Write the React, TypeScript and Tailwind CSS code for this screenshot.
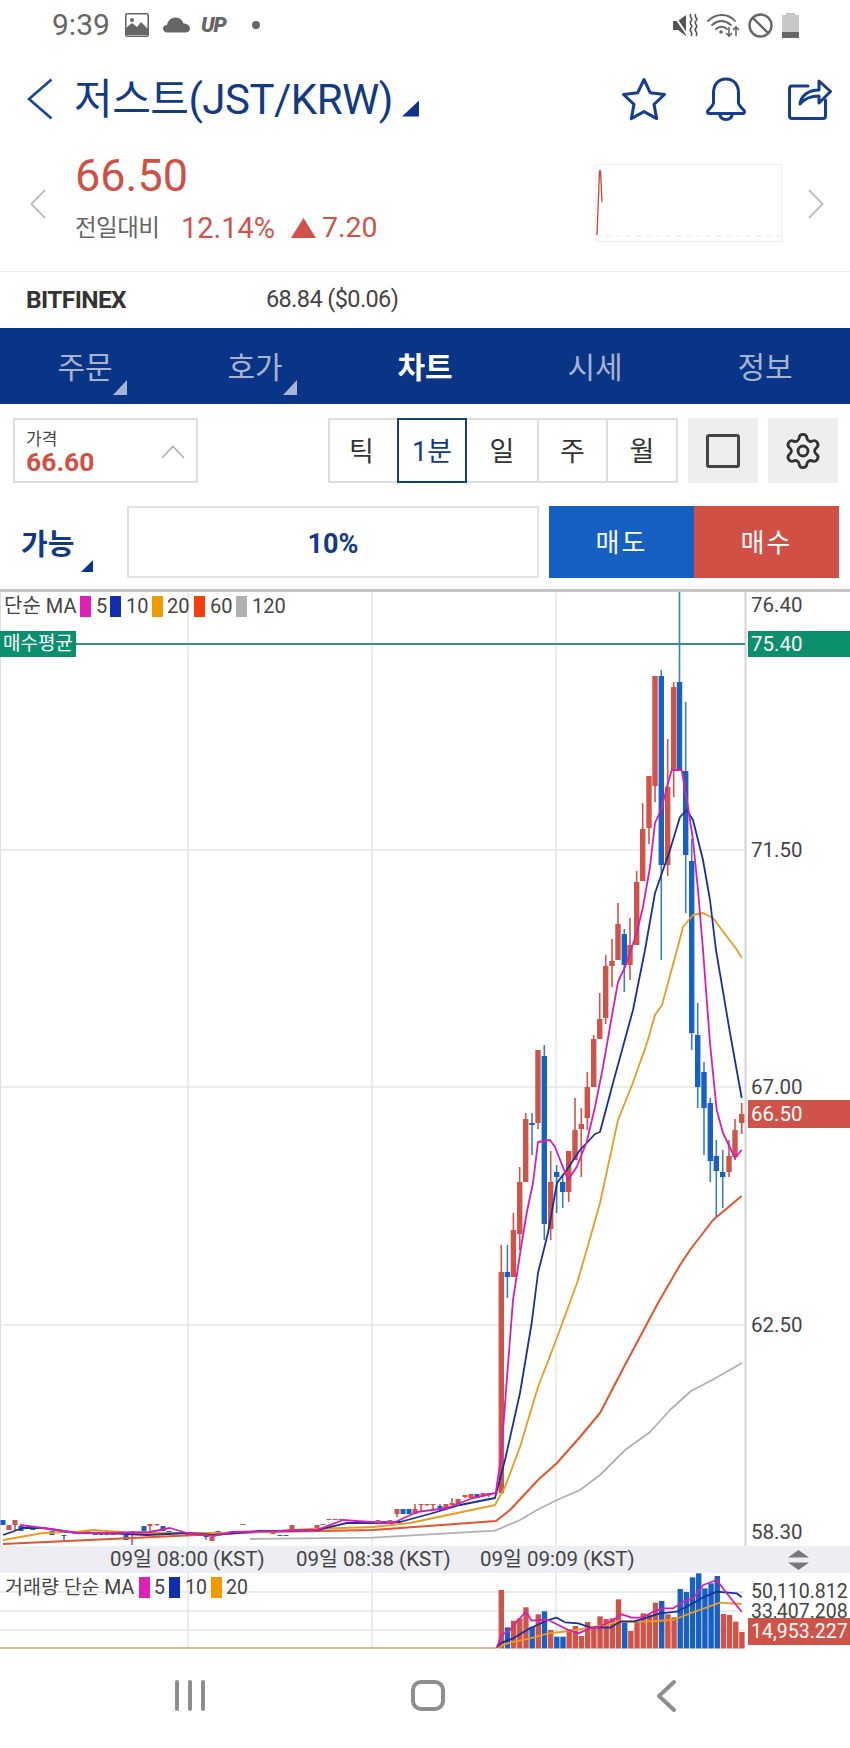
import React from "react";
import { Settings } from "lucide-react";

const RED = "#d0534a";
const BLUE = "#1760c4";

// [x, bodyTop, bodyBottom, wickTop, wickLow, isUp]
type Candle = [number, number, number, number, number, boolean];

const smallCandles: Candle[] = [
  [3, 1520, 1525, 1520, 1525, false], [9, 1525, 1530, 1525, 1530, true], [15, 1520, 1525, 1520, 1530, true],
  [21, 1526, 1531, 1526, 1531, false], [33, 1529, 1530, 1529, 1530, false], [52, 1531, 1535, 1531, 1535, false],
  [64, 1535, 1536, 1535, 1541, false], [83, 1531, 1533, 1531, 1534, true], [88, 1531, 1533, 1531, 1534, true],
  [95, 1533, 1535, 1533, 1535, false], [101, 1534, 1535, 1534, 1535, false], [107, 1531, 1535, 1531, 1535, false],
  [113, 1531, 1535, 1531, 1535, true], [119, 1531, 1533, 1531, 1533, true], [126, 1535, 1540, 1535, 1540, false],
  [132, 1531, 1532, 1531, 1545, true], [144, 1526, 1531, 1526, 1531, false], [150, 1524, 1526, 1524, 1535, true],
  [157, 1524, 1525, 1524, 1526, true], [163, 1526, 1531, 1526, 1531, false], [169, 1531, 1535, 1531, 1535, false],
  [182, 1535, 1536, 1535, 1536, false], [188, 1533, 1535, 1533, 1535, false], [193, 1532, 1535, 1532, 1535, true],
  [200, 1535, 1536, 1535, 1536, false], [206, 1535, 1537, 1535, 1540, false], [212, 1537, 1541, 1537, 1541, true],
  [218, 1531, 1535, 1531, 1535, false], [231, 1531, 1532, 1531, 1533, true], [237, 1531, 1532, 1531, 1533, true],
  [243, 1524, 1525, 1524, 1525, true], [273, 1531, 1534, 1531, 1534, true], [280, 1535, 1536, 1535, 1536, false],
  [286, 1535, 1536, 1535, 1536, false], [292, 1525, 1530, 1525, 1530, true], [317, 1525, 1530, 1525, 1530, true],
  [323, 1524, 1525, 1524, 1525, true], [329, 1519, 1520, 1519, 1520, true], [335, 1519, 1520, 1519, 1520, true],
  [341, 1519, 1520, 1519, 1520, true], [347, 1520, 1521, 1520, 1521, true], [353, 1520, 1521, 1520, 1521, true],
  [366, 1521, 1524, 1521, 1524, false], [372, 1521, 1524, 1521, 1524, false], [378, 1520, 1521, 1520, 1521, true],
  [384, 1521, 1524, 1521, 1524, false], [390, 1520, 1521, 1520, 1521, true], [397, 1509, 1514, 1509, 1517, true],
  [403, 1509, 1514, 1509, 1514, false], [409, 1509, 1514, 1509, 1514, false], [415, 1509, 1514, 1504, 1514, true],
  [421, 1504, 1505, 1504, 1511, true], [427, 1504, 1505, 1504, 1506, true], [433, 1504, 1505, 1504, 1510, true],
  [440, 1506, 1508, 1504, 1511, false], [446, 1504, 1508, 1504, 1508, true], [452, 1503, 1505, 1498, 1505, true],
  [458, 1499, 1504, 1499, 1504, true], [465, 1495, 1497, 1495, 1498, true], [471, 1494, 1498, 1494, 1498, true],
  [477, 1494, 1498, 1494, 1498, false], [483, 1493, 1495, 1493, 1497, true], [489, 1493, 1494, 1493, 1497, true],
  [495, 1493, 1494, 1493, 1494, true],
];

const bigCandles: Candle[] = [
  [501.3, 1272, 1493, 1245, 1493, true], [507.4, 1272, 1277, 1245, 1298, false], [513.4, 1230, 1277, 1213, 1277, true],
  [519.7, 1182, 1234, 1167, 1250, true], [525.7, 1119, 1182, 1113, 1182, true], [532, 1123, 1125, 1113, 1155, false],
  [538, 1050, 1123, 1050, 1129, true], [544.3, 1056, 1224, 1045, 1240, false], [550.7, 1182, 1229, 1151, 1240, true],
  [556.7, 1172, 1177, 1165, 1213, false], [562.7, 1182, 1192, 1175, 1208, false], [568.7, 1151, 1192, 1151, 1202, true],
  [575, 1130, 1160, 1098, 1160, true], [581.3, 1124, 1129, 1108, 1177, true], [587.3, 1087, 1118, 1072, 1130, true],
  [593.7, 1039, 1087, 1035, 1087, true], [599.7, 1019, 1039, 993, 1039, true], [605.7, 966, 1018, 955, 1024, true],
  [612, 961, 966, 939, 987, true], [618, 924, 960, 903, 960, true], [624.3, 934, 965, 929, 992, false],
  [630, 945, 965, 918, 980, true], [636.7, 882, 945, 871, 945, true], [642.7, 829, 881, 803, 881, true],
  [649, 776, 828, 776, 844, true], [655, 676, 786, 676, 802, true], [661.3, 676, 865, 670, 960, false],
  [667.7, 787, 865, 739, 876, true], [673.7, 687, 770, 682, 797, true], [679.5, 682, 770, 592, 770, false],
  [685.7, 771, 855, 702, 913, false], [691.7, 861, 1033, 839, 1050, false], [697.7, 1035, 1087, 1003, 1108, false],
  [704, 1072, 1108, 1062, 1155, false], [710.3, 1103, 1161, 1098, 1182, false], [716.3, 1156, 1171, 1140, 1218, false],
  [722.7, 1172, 1177, 1150, 1208, false], [729, 1156, 1172, 1140, 1177, true], [735, 1130, 1157, 1119, 1160, true],
  [741.7, 1114, 1123, 1103, 1134, true],
];

const ma5 =
  "20,1525 43,1528 77,1533 107,1533 150,1532 170,1528 187,1533 213,1536 233,1532 280,1531 317,1530 343,1520 370,1522 393,1523 417,1512 447,1508 473,1498 495.7,1493 500.7,1460 513,1300 521.7,1243 526.7,1213 533,1183 538,1142 550,1140 555,1147 568,1180 576.7,1167 586.7,1142 595,1107 603,1067 611.7,1017 618,982 625,967 636.7,933 643,907 650,867 655,823 661.7,808 668,783 671.7,770 681.7,770 688,807 693,840 698,890 703,950 710,1043 716.7,1110 723,1133 735,1158 741.7,1150";
const ma10 =
  "3,1535 23,1528 43,1528 77,1533 107,1533 147,1535 187,1533 213,1535 260,1531 280,1531 317,1530 347,1523 373,1523 400,1522 433,1513 460,1505 495,1498 505,1460 520,1393 531.7,1323 538,1273 548,1233 557,1183 566.7,1170 580,1150 595,1134 600,1132 613,1083 633,1010 645,950 655,893 670,850 680,817 686.7,810 693,820 703,860 710,900 716,950 730,1033 741.7,1098";
const ma20 =
  "3,1540 43,1533 77,1531.7 93,1530 133,1533 173,1533 213,1533 260,1532 310,1529 373,1527 410,1523 495,1505 505,1487 520,1447 538,1387 555,1343 577,1283 586.7,1250 600,1203 618,1120 632,1085 647,1043 655,1015 662,1005 677,950 683,927 693,915 703,913 713,918 737,950 741.7,958";
const ma60 =
  "3,1544 260,1532 373,1530 496,1521 510,1510 538,1480 557,1463 580,1437 600,1413 625,1365 658,1303 680,1265 690,1250 713,1220 741.7,1196";
const ma120 =
  "250,1539 373,1537.7 495,1530.7 520,1520 537,1510 557,1500 580,1490 600,1475 625,1450 650,1432 670,1410 691,1391 714,1379 742,1363";

// [bar top in 3x zoom, isUp]; the zoom starts at (490, 1570)
const volumes: [number, boolean][] = [
  [60, true], [172, false], [152, true], [145, true], [112, true], [170, false], [133, true], [124, false],
  [180, true], [200, false], [200, false], [178, true], [168, true], [198, true], [156, true], [170, true],
  [139, true], [147, true], [145, true], [88, true], [158, false], [183, true], [153, true], [130, true],
  [133, true], [98, true], [93, false], [133, true], [142, true], [57, false], [66, false], [22, false],
  [10, false], [55, false], [40, false], [18, false], [132, true], [135, true], [155, true], [186, true],
];

const toChart = (pts: number[][]) =>
  pts.map(([x, y]) => `${(490 + x / 3).toFixed(1)},${(1570 + y / 3).toFixed(1)}`).join(" ");

const volMa5 = toChart([
  [20, 232], [35, 195], [60, 180], [85, 150], [108, 125], [125, 152], [145, 150], [175, 150], [205, 165], [235, 180],
  [265, 190], [300, 175], [330, 170], [370, 150], [395, 133], [425, 143], [455, 143], [490, 125], [520, 115], [550, 115],
  [580, 95], [610, 85], [640, 45], [680, 30], [710, 70], [755, 125],
]);
const volMa10 = toChart([
  [20, 232], [35, 218], [70, 205], [120, 175], [175, 150], [200, 143], [225, 157], [265, 160], [300, 172], [360, 173],
  [390, 155], [430, 155], [470, 143], [510, 130], [560, 125], [600, 105], [640, 82], [680, 65], [740, 70], [755, 82],
]);
const volMa20 = toChart([
  [20, 232], [60, 218], [120, 205], [175, 190], [240, 183], [300, 172], [350, 165], [390, 152], [450, 155], [500, 153],
  [550, 150], [600, 130], [650, 112], [690, 98], [755, 102],
]);

function Candles({ items, bodyWidth }: { items: Candle[]; bodyWidth: number }) {
  return (
    <>
      {items.map(([x, top, bottom, wickTop, wickLow, up], i) => (
        <g key={i}>
          <line x1={x} x2={x} y1={wickTop} y2={wickLow} stroke={up ? RED : "#3b7cc6"} strokeWidth={1.6} />
          <rect x={x - bodyWidth / 2} y={top} width={bodyWidth} height={bottom - top} fill={up ? RED : BLUE} />
        </g>
      ))}
    </>
  );
}

function Line({ points, color, width = 1.8 }: { points: string; color: string; width?: number }) {
  return <polyline points={points} fill="none" stroke={color} strokeWidth={width} strokeLinejoin="round" />;
}

function Swatch({ className }: { className: string }) {
  return <span className={`inline-block w-[11px] h-[21px] ${className}`} />;
}

function CornerTriangle({ className }: { className: string }) {
  return <span className={`block [clip-path:polygon(100%_0,100%_100%,0_100%)] ${className}`} />;
}

function StatusBar() {
  return (
    <div className="h-[50px] flex items-center pl-[52px] pr-[51px] text-[#666666]">
      <span className="text-[30px] leading-none w-[73px]">9:39</span>
      <svg width="24" height="24" viewBox="0 0 24 24">
        <rect x="0.8" y="0.8" width="22.4" height="22.4" rx="1.5" fill="none" stroke="#666" strokeWidth="1.6" />
        <path d="M1 22V15l6-5 5 4 4-5 7 7v6z" fill="#666" />
        <circle cx="7" cy="7" r="2" fill="#666" />
      </svg>
      <svg className="ml-[14px]" width="27" height="16" viewBox="0 0 27 16">
        <path d="M5 15.5C1.5 15.5 0 13.5 0 11.5C0 9.5 1.8 8 4 8C4.5 3.5 8.5 0.5 12.5 0.5C17 0.5 19.8 3.5 20.5 6.5C24.5 6.5 27 9 27 11.5C27 14 25 15.5 22.5 15.5Z" fill="#666" />
      </svg>
      <span className="ml-[11px] w-[30px] text-[21px] leading-none font-black italic tracking-[-1px]">UP</span>
      <span className="ml-[21px] w-[8px] h-[8px] rounded-full bg-[#666666]" />
      <svg className="ml-auto" width="25" height="25" viewBox="0 0 25 25">
        <path d="M0 8h5l8-6v21l-8-6H0z" fill="#555" />
        <path d="M0 1l15 22" stroke="#fff" strokeWidth="2" />
        <path d="M19 1c-3 3 3 4 0 7s3 4 0 7 3 4 0 8M24 1c-3 3 3 4 0 7s3 4 0 7 3 4 0 8" fill="none" stroke="#555" strokeWidth="1.6" transform="translate(-1 0)" />
      </svg>
      <svg className="ml-[9px]" width="33" height="25" viewBox="0 0 33 25">
        <path d="M1 8c8-8 20-8 27 0M5 12c6-5 13-5 19 0M9 16c3-3 8-3 11 0" fill="none" stroke="#666" strokeWidth="1.8" strokeLinecap="round" />
        <circle cx="14" cy="19" r="1.8" fill="#666" />
        <path d="M22 14v9m-3-3l3 3 3-3M29 23v-9m-3 3l3-3 3 3" fill="none" stroke="#666" strokeWidth="1.6" />
      </svg>
      <svg className="ml-[8px]" width="25" height="25" viewBox="0 0 25 25">
        <circle cx="12.5" cy="12.5" r="11" fill="none" stroke="#666" strokeWidth="2.4" />
        <path d="M5 5l15 15" stroke="#666" strokeWidth="2.4" />
      </svg>
      <div className="ml-[9px] w-[17px] h-[25px] flex flex-col items-center">
        <span className="w-[9px] h-[2px] bg-[#c4c4c4]" />
        <span className="w-[17px] h-[17px] bg-[#c8c8c8]" />
        <span className="w-[17px] h-[6px] bg-[#666666]" />
      </div>
    </div>
  );
}

function TitleBar() {
  return (
    <div className="h-[95px] box-border pt-[2px] flex items-center pl-[27px] text-[#123a85]">
      <svg width="26" height="42" viewBox="0 0 26 42">
        <path d="M24.5 1.5L2 21l22.5 19.5" fill="none" stroke="#1a4a96" strokeWidth="2.8" />
      </svg>
      <span className="ml-[21px] mt-[2px] text-[42px] leading-none tracking-[-0.5px] whitespace-nowrap w-[318px]">저스트(JST/KRW)</span>
      <CornerTriangle className="ml-[10px] mt-[20px] w-[17px] h-[16px] bg-[#0d348a]" />
      <svg className="ml-[202px]" width="46" height="44" viewBox="0 0 46 44">
        <path d="M23 2.5l6.2 13.2 14.3 1.8-10.5 9.9 2.7 14.2L23 34.6 10.3 41.6 13 27.4 2.5 17.5l14.3-1.8z" fill="none" stroke="#153f8c" strokeWidth="3" strokeLinejoin="round" />
      </svg>
      <svg className="ml-[38px]" width="42" height="44" viewBox="0 0 42 44">
        <path d="M21 2c-8.5 0-12.5 6.5-12.5 14v9.5c0 3-3 5-5.5 8-1 1.2-0.5 3 1 3h34c1.5 0 2-1.8 1-3-2.5-3-5.5-5-5.5-8V16C33.5 8.5 29.5 2 21 2z" fill="none" stroke="#153f8c" strokeWidth="3" strokeLinejoin="round" />
        <path d="M14.5 36.5c0.5 4 3.2 6 6.5 6s6-2 6.5-6" fill="none" stroke="#153f8c" strokeWidth="3" />
      </svg>
      <svg className="ml-[41px]" width="44" height="42" viewBox="0 0 44 42">
        <path d="M20 8H4c-1.5 0-2.5 1-2.5 2.5V38c0 1.5 1 2.5 2.5 2.5h31c1.5 0 2.5-1 2.5-2.5V22" fill="none" stroke="#153f8c" strokeWidth="3" strokeLinecap="round" />
        <path d="M12 26c1-8 8-14 19-14V3l11.5 10.5L31 25v-7c-8 0-14 2-19 8z" fill="#fff" stroke="#153f8c" strokeWidth="3" strokeLinejoin="round" />
      </svg>
    </div>
  );
}

function PriceRow() {
  return (
    <div className="h-[126px] flex items-start">
      <svg className="ml-[30px] mt-[44px]" width="16" height="30" viewBox="0 0 16 30">
        <path d="M15 1L1.5 15 15 29" fill="none" stroke="#b5b5b5" strokeWidth="1.8" />
      </svg>
      <div className="ml-[29px] flex-1 pt-[7px]">
        <div className="h-[48px] text-[45px] leading-[48px] text-[#cf5145]">66.50</div>
        <div className="mt-[10px] h-[36px] flex items-center text-[#d0534a]">
          <span className="pt-[1px] text-[23.5px] text-[#666666] w-[106px] tracking-[-0.5px] whitespace-nowrap">전일대비</span>
          <span className="text-[29px] leading-none w-[110px]">12.14%</span>
          <span className="w-[25px] h-[20px] bg-[#d0534a] [clip-path:polygon(50%_0,100%_100%,0_100%)]" />
          <span className="ml-[6px] text-[28.5px] leading-none">7.20</span>
        </div>
      </div>
      <div className="mt-[19px] w-[187px] h-[78px] border border-[#eeeeee] flex">
        <svg width="185" height="76" viewBox="0 0 185 76">
          <line x1="0" x2="185" y1="71" y2="71" stroke="#e4e4e4" strokeWidth="1" strokeDasharray="5 5" />
          <path d="M1 70L3.5 6 4.5 6 6 37" fill="none" stroke="#c4473c" strokeWidth="1.3" />
        </svg>
      </div>
      <svg className="ml-[26px] mr-[26px] mt-[44px]" width="16" height="30" viewBox="0 0 16 30">
        <path d="M1 1l13.5 14L1 29" fill="none" stroke="#b5b5b5" strokeWidth="1.8" />
      </svg>
    </div>
  );
}

function Tabs() {
  const items = [
    { label: "주문", corner: true },
    { label: "호가", corner: true },
    { label: "차트", active: true },
    { label: "시세" },
    { label: "정보" },
  ];
  return (
    <div className="h-[76px] grid grid-cols-5 bg-[#0a3586]">
      {items.map((item) => (
        <div
          key={item.label}
          className={`relative flex items-center justify-center pt-[3px] text-[30px] leading-none ${
            item.active ? "font-bold text-white" : "text-[#a6b4d2]"
          }`}
        >
          {item.label}
          {item.corner && (
            <CornerTriangle className="absolute left-[113px] top-[52px] w-[14px] h-[15px] bg-[#a9b5d3]" />
          )}
        </div>
      ))}
    </div>
  );
}

function Controls() {
  const periods = ["틱", "1분", "일", "주", "월"];
  return (
    <div className="mt-[14px] h-[65px] flex pl-[13px]">
      <div className="w-[185px] border-2 border-[#dddddd] flex items-center pl-[11px] pr-[11px] pt-[2px]">
        <div className="flex-1">
          <div className="text-[17px] leading-[20px] text-[#444444]">가격</div>
          <div className="text-[26.5px] leading-[26px] font-bold text-[#cf5145]">66.60</div>
        </div>
        <svg width="24" height="14" viewBox="0 0 24 14">
          <path d="M1 13L12 1.5 23 13" fill="none" stroke="#b0b0b0" strokeWidth="1.6" />
        </svg>
      </div>
      <div className="ml-[130px] w-[350px] grid grid-cols-[67px_70px_70px_69px_70px] border-2 border-[#dddddd]">
        {periods.map((p, i) => (
          <div
            key={p}
            className={
              p === "1분"
                ? "-my-[2px] pt-[4px] flex items-center justify-center text-[27px] text-[#123a85] border-2 border-[#123f80]"
                : `pt-[4px] flex items-center justify-center text-[27px] text-[#333333] ${i === 0 ? "pr-[4px]" : ""} ${i > 2 ? "border-l-2 border-[#dddddd]" : ""}`
            }
          >
            {p}
          </div>
        ))}
      </div>
      <div className="ml-[10px] w-[70px] bg-[#eeeeee] flex items-center justify-center">
        <span className="w-[34px] h-[34px] rounded-[3px] border-[3px] border-[#444444]" />
      </div>
      <div className="ml-[10px] w-[70px] bg-[#eeeeee] flex items-center justify-center">
        <Settings size={40} strokeWidth={1.7} className="text-[#333333]" />
      </div>
    </div>
  );
}

function OrderRow() {
  return (
    <div className="mt-[23px] h-[72px] flex items-stretch">
      <div className="relative w-[127px]">
        <span className="absolute left-[21px] top-[20px] text-[29px] leading-[38px] font-bold text-[#123a85]">가능</span>
        <CornerTriangle className="absolute left-[81px] top-[54px] w-[12px] h-[12px] bg-[#0d348a]" />
      </div>
      <div className="w-[412px] border-2 border-[#e2e2e2] pt-[4px] flex items-center justify-center text-[27px] font-bold text-[#123a85]">
        10%
      </div>
      <div className="ml-[10px] w-[145px] pt-[2px] bg-[#1560c1] flex items-center justify-center text-[26px] tracking-[2px] text-white">
        매도
      </div>
      <div className="w-[145px] pt-[2px] bg-[#d05046] flex items-center justify-center text-[26px] tracking-[2px] text-white">
        매수
      </div>
    </div>
  );
}

function PriceChart() {
  return (
    <div className="relative h-[954px] border-t-[3px] border-[#c4c4c4] box-content -mt-[3px] text-[20.5px] leading-none text-[#444444]">
      <svg className="block" width="850" height="954" viewBox="0 592 850 954">
        <line x1="0.5" x2="0.5" y1="592" y2="1546" stroke="#dddddd" />
        {[188, 372, 556].map((x) => (
          <line key={x} x1={x} x2={x} y1="592" y2="1546" stroke="#dfdfdf" strokeWidth="1.2" />
        ))}
        {[850, 1087, 1325].map((y) => (
          <line key={y} x1="0" x2="745" y1={y} y2={y} stroke="#e4e4e4" strokeWidth="1.5" />
        ))}
        <line x1="745.5" x2="745.5" y1="592" y2="1546" stroke="#d4d4d4" strokeWidth="2" />
        <line x1="70" x2="745" y1="644" y2="644" stroke="#3d8f84" strokeWidth="1.8" />
        <Candles items={smallCandles} bodyWidth={5} />
        <Candles items={bigCandles} bodyWidth={5.4} />
        <Line points={ma120} color="#b0b0b0" />
        <Line points={ma60} color="#e4532c" width={2} />
        <Line points={ma20} color="#e89b1e" />
        <Line points={ma10} color="#1a2f9c" />
        <Line points={ma5} color="#d41fb4" />
      </svg>

      <div className="absolute left-[4px] top-[3px] h-[22px] flex items-center whitespace-nowrap text-[20px]">
        <span className="w-[76px]">단순 MA</span>
        <Swatch className="bg-[#e01fb5]" />
        <span className="ml-[5px] w-[14px]">5</span>
        <Swatch className="bg-[#0f2fb0]" />
        <span className="ml-[5px] w-[26px]">10</span>
        <Swatch className="bg-[#ee9b00]" />
        <span className="ml-[4px] w-[27px]">20</span>
        <Swatch className="bg-[#fb3c0c]" />
        <span className="ml-[5px] w-[26px]">60</span>
        <Swatch className="bg-[#b0b0b0]" />
        <span className="ml-[5px]">120</span>
      </div>

      <span className="absolute left-0 top-[39px] w-[76px] h-[26px] bg-[#0b8f6c] text-[19px] leading-[26px] text-center text-white whitespace-nowrap">매수평균</span>
      <span className="absolute left-[751px] top-[2px] leading-[22px]">76.40</span>
      <span className="absolute left-[748px] top-[39px] w-[102px] h-[26px] pl-[3px] bg-[#0b8f6c] leading-[26px] text-white">75.40</span>
      <span className="absolute left-[751px] top-[247px] leading-[22px]">71.50</span>
      <span className="absolute left-[751px] top-[484px] leading-[22px]">67.00</span>
      <span className="absolute left-[748px] top-[508px] w-[102px] h-[28px] pl-[3px] bg-[#d0534a] leading-[28px] text-white">66.50</span>
      <span className="absolute left-[751px] top-[722px] leading-[22px]">62.50</span>
      <span className="absolute left-[751px] top-[929px] leading-[22px]">58.30</span>
    </div>
  );
}

function TimeAxis() {
  return (
    <div className="relative h-[27px] bg-[#eceef3] text-[20.5px] leading-[27px] text-[#444444] whitespace-nowrap">
      <span className="absolute left-[110px]">09일 08:00 (KST)</span>
      <span className="absolute left-[296px]">09일 08:38 (KST)</span>
      <span className="absolute left-[480px]">09일 09:09 (KST)</span>
      <svg className="absolute left-[787px] top-[4px]" width="23" height="20" viewBox="0 0 23 20">
        <path d="M11.5 0L22 7.5H1zM11.5 20L1 12.5h21z" fill="#777777" />
      </svg>
    </div>
  );
}

function VolumeChart() {
  return (
    <div className="relative h-[77px] text-[19.5px] leading-none text-[#444444]">
      <svg className="block" width="850" height="77" viewBox="0 1573 850 77">
        {[188, 372, 556].map((x) => (
          <line key={x} x1={x} x2={x} y1="1573" y2="1648" stroke="#dfdfdf" strokeWidth="1.2" />
        ))}
        {[1592, 1611, 1630].map((y) => (
          <line key={y} x1="0" x2="745" y1={y} y2={y} stroke="#e4e4e4" strokeWidth="1.3" />
        ))}
        <line x1="0" x2="497" y1="1648" y2="1648" stroke="#cfa668" strokeWidth="1.3" />
        {volumes.map(([top, up], i) => (
          <rect
            key={i}
            x={501.3 + 6.17 * i - 2.7}
            y={1570 + top / 3}
            width={5.4}
            height={1648.5 - (1570 + top / 3)}
            fill={up ? RED : BLUE}
          />
        ))}
        <Line points={volMa20} color="#e89b1e" />
        <Line points={volMa10} color="#1a2f9c" />
        <Line points={volMa5} color="#d41fb4" />
      </svg>

      <div className="absolute left-[5px] top-[4px] h-[21px] flex items-center whitespace-nowrap text-[19.5px]">
        <span className="w-[134px]">거래량 단순 MA</span>
        <Swatch className="bg-[#e01fb5]" />
        <span className="ml-[4px] w-[15px]">5</span>
        <Swatch className="bg-[#0f2fb0]" />
        <span className="ml-[5px] w-[26px]">10</span>
        <Swatch className="bg-[#ee9b00]" />
        <span className="ml-[4px]">20</span>
      </div>

      <span className="absolute left-[751px] top-[8px] leading-[22px]">50,110.812</span>
      <span className="absolute left-[751px] top-[28px] leading-[22px]">33,407.208</span>
      <span className="absolute left-[748px] top-[45px] w-[102px] h-[27px] pl-[3px] bg-[#d0534a] leading-[27px] text-white">14,953.227</span>
    </div>
  );
}

function NavBar() {
  return (
    <div className="relative h-[98px] flex items-start pt-[30px]">
      <div className="ml-[175px] w-[30px] h-[31px] flex justify-between">
        <span className="w-[4px] rounded-full bg-[#8e8e8e]" />
        <span className="w-[4px] rounded-full bg-[#8e8e8e]" />
        <span className="w-[4px] rounded-full bg-[#8e8e8e]" />
      </div>
      <span className="ml-[206px] w-[34px] h-[31px] rounded-[10px] border-[4px] border-[#8e8e8e]" />
      <svg className="ml-[211px]" width="20" height="32" viewBox="0 0 20 32">
        <path d="M18 2L3 16l15 14" fill="none" stroke="#8e8e8e" strokeWidth="4" strokeLinecap="round" strokeLinejoin="round" />
      </svg>
    </div>
  );
}

export default function App() {
  return (
    <div className="w-[850px] h-[1748px] overflow-hidden bg-white font-['Roboto','Noto_Sans_CJK_KR',sans-serif]">
      <StatusBar />
      <TitleBar />
      <PriceRow />
      <div className="h-[1px] bg-[#e8e8e8]" />
      <div className="h-[56px] flex items-center pl-[26px]">
        <span className="w-[240px] text-[24.5px] font-bold tracking-[-0.6px] text-[#333333]">BITFINEX</span>
        <span className="text-[23.5px] tracking-[-0.6px] text-[#444444]">68.84 ($0.06)</span>
      </div>
      <Tabs />
      <Controls />
      <OrderRow />
      <div className="mt-[14px]">
        <PriceChart />
        <TimeAxis />
        <VolumeChart />
      </div>
      <NavBar />
    </div>
  );
}
